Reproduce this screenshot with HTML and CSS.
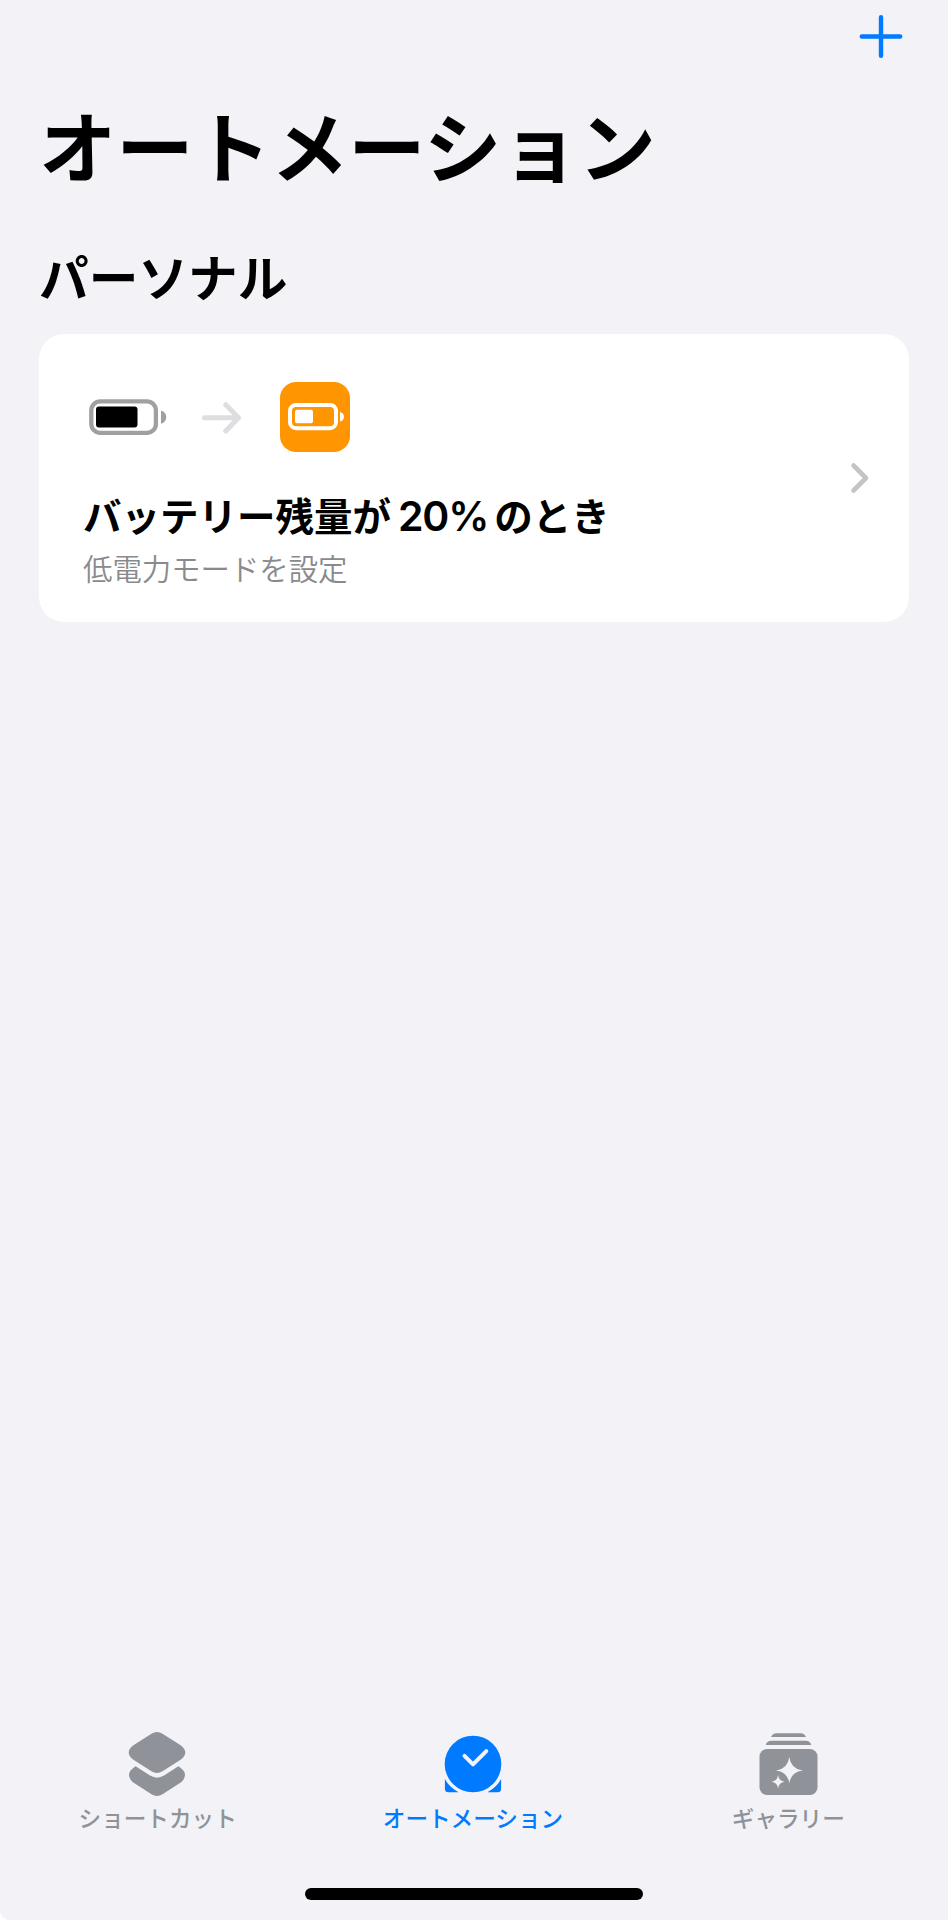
FILE: index.html
```html
<!DOCTYPE html>
<html lang="ja">
<head>
    <meta charset="UTF-8">
    <meta name="viewport" content="width=device-width, initial-scale=1.0">
    <title>オートメーション</title>
    <link rel="stylesheet" href="styles.css">
</head>
<body>

<div class="screen">
    <!-- 追加ボタン -->
    <header class="nav-bar">
        <button class="add-button" aria-label="追加">
            <svg width="44" height="44" viewBox="0 0 44 44">
                <path d="M22 3.3V41.7M2.8 22.5H41.2" />
            </svg>
        </button>
    </header>

    <main class="content">
        <h1>オートメーション</h1>
        <h2>パーソナル</h2>

        <!-- オートメーションのカード -->
        <a class="card">
            <div class="card-body">
                <div class="card-icons">
                    <svg class="battery" width="80" height="36" viewBox="0 0 80 36">
                        <rect x="2.3" y="2.3" width="64.6" height="31.6" rx="9" fill="none" stroke="#a0a0a3" stroke-width="4.3" />
                        <rect x="7" y="7.6" width="41.5" height="21" rx="3" fill="#000" />
                        <path d="M72 11.5C79 13 79 23 72 24.8Z" fill="#a0a0a3" />
                    </svg>
                    <svg class="arrow" width="40" height="34" viewBox="0 0 40 34">
                        <path d="M2.5 17.7H35.5M23.8 4.7L36.5 17.7L23.8 30.9" />
                    </svg>
                    <div class="app-icon">
                        <svg width="58" height="28" viewBox="0 0 58 28">
                            <rect x="2" y="2" width="46" height="23.2" rx="6" fill="none" stroke="#fff" stroke-width="4" />
                            <rect x="7" y="6.8" width="18" height="13.5" rx="2" fill="#fff" />
                            <path d="M52 9C57.3 10 57.3 17.5 52 18.6Z" fill="#fff" />
                        </svg>
                    </div>
                </div>
                <div class="card-title">バッテリー残量が<span class="percent">20%</span>のとき</div>
                <div class="card-subtitle">低電力モードを設定</div>
            </div>
            <svg class="chevron" width="20" height="32" viewBox="0 0 20 32">
                <path d="M3.5 3.5L16 16L3.5 28.5" />
            </svg>
        </a>
    </main>

    <!-- タブバー -->
    <nav class="tab-bar">
        <a class="tab">
            <svg width="60" height="66" viewBox="0 0 60 66">
                <path d="M23.5 2.8Q29 -.8 34.5 2.8L53 14.5Q61.6 21.5 53 28.5L34.5 40.2Q29 43.6 23.5 40.2L5 28.5Q-3.6 21.5 5 14.5Z" />
                <path d="M7.6 35.3L22 44.6Q29 48.8 36 44.6L50.4 35.3Q61.8 42.5 53.5 51L34.5 63.2Q29 66.6 23.5 63.2L4.5 51Q-3.8 42.5 7.6 35.3Z" />
            </svg>
            <span>ショートカット</span>
        </a>
        <a class="tab active">
            <svg width="60" height="66" viewBox="0 0 60 66">
                <circle cx="30" cy="33" r="28.3" />
                <path d="M1.9 48Q6 56 15.5 61.3H5.5Q1.9 61.3 1.9 57.7ZM58.1 48Q54 56 44.5 61.3H54.5Q58.1 61.3 58.1 57.7Z" />
                <path class="check" d="M21.5 24.9L30 33.4L43.3 20.1" />
            </svg>
            <span>オートメーション</span>
        </a>
        <a class="tab">
            <svg width="60" height="66" viewBox="0 0 60 66">
                <path d="M13 6Q14.5 2.2 18.5 2.2H42.5Q46.5 2.2 48 6ZM7.7 14Q9 9.8 13.5 9.8H47.5Q52 9.8 53.3 14Z" />
                <rect x="1.5" y="18" width="58" height="46" rx="7.5" />
                <path class="sparkle" d="M31.3 26Q32.8 38 44.7 39.5Q32.8 41 31.3 52.5Q29.8 41 18 39.5Q29.8 38 31.3 26ZM20.1 44Q20.9 50 26.7 50.8Q20.9 51.6 20.1 57.5Q19.3 51.6 13.5 50.8Q19.3 50 20.1 44Z" />
            </svg>
            <span>ギャラリー</span>
        </a>
    </nav>

    <div class="home-indicator"></div>
</div>

</body>
</html>
```

FILE: styles.css
```css
* {
    box-sizing: border-box;
}
body {
    margin: 0;
    background-color: #fff;
    font-family: "Noto Sans CJK JP", sans-serif;
    color: #000;
}
.screen {
    display: flex;
    flex-direction: column;
    width: 948px;
    height: 1920px;
    background-color: #f2f2f7;
    border-bottom-left-radius: 9px;
}
.nav-bar {
    display: flex;
    justify-content: flex-end;
    height: 83px;
    padding: 14px 45px 0 0;
}
.add-button {
    width: 44px;
    height: 44px;
    padding: 0;
    border: none;
    background: none;
    cursor: pointer;
}
.add-button svg {
    display: block;
    fill: none;
    stroke: #007aff;
    stroke-width: 4.4;
    stroke-linecap: round;
}
.content {
    flex: 1;
    padding: 0 39px;
}
h1 {
    margin: 0;
    font-size: 77.3px;
    line-height: 120px;
    font-weight: 700;
}
h2 {
    margin: 34px 0 20px;
    font-size: 49.7px;
    line-height: 77px;
    font-weight: 700;
}

/* カード */
.card {
    display: flex;
    align-items: center;
    justify-content: space-between;
    height: 288px;
    padding: 0 39px 0 44px;
    background-color: #fff;
    border-radius: 25px;
}
.card-body {
    height: 288px;
    padding-top: 47px;
}
.card-icons {
    display: flex;
    align-items: center;
    height: 71px;
    padding-left: 6px;
}
.arrow {
    margin: 0 38px 0 33px;
    fill: none;
    stroke: #dedee1;
    stroke-width: 5;
    stroke-linecap: round;
    stroke-linejoin: round;
}
.app-icon {
    display: flex;
    align-items: center;
    width: 70px;
    height: 70px;
    padding-left: 8px;
    background-color: #ff9500;
    border-radius: 16px;
}
.card-title {
    margin-top: 34px;
    font-size: 38.5px;
    line-height: 56px;
    font-weight: 700;
    white-space: nowrap;
}
.percent {
    margin: 0 6px 0 7px;
    font-family: Inter, sans-serif;
    font-size: 41px;
    font-weight: 600;
    letter-spacing: -1.2px;
}
.card-subtitle {
    margin-top: 1px;
    font-size: 29.4px;
    line-height: 44px;
    font-weight: 350;
    color: #8a8a8e;
}
.chevron {
    fill: none;
    stroke: #c4c4c6;
    stroke-width: 4.6;
    stroke-linecap: round;
    stroke-linejoin: round;
}

/* タブバー */
.tab-bar {
    display: flex;
    width: 946px;
    height: 157px;
}
.tab {
    flex: 1;
    display: flex;
    flex-direction: column;
    align-items: center;
    font-size: 22.6px;
    line-height: 34px;
    font-weight: 500;
    color: #8f9299;
}
.tab svg {
    margin-bottom: 4px;
    fill: #8f9299;
}
.tab.active {
    color: #007aff;
}
.tab.active svg {
    fill: #007aff;
}
.tab .check {
    fill: none;
    stroke: #f2f2f7;
    stroke-width: 4;
    stroke-linecap: round;
    stroke-linejoin: round;
}
.tab .sparkle {
    fill: #f2f2f7;
}
.home-indicator {
    align-self: center;
    width: 338px;
    height: 12px;
    margin-bottom: 20px;
    background-color: #000;
    border-radius: 6px;
}
```
